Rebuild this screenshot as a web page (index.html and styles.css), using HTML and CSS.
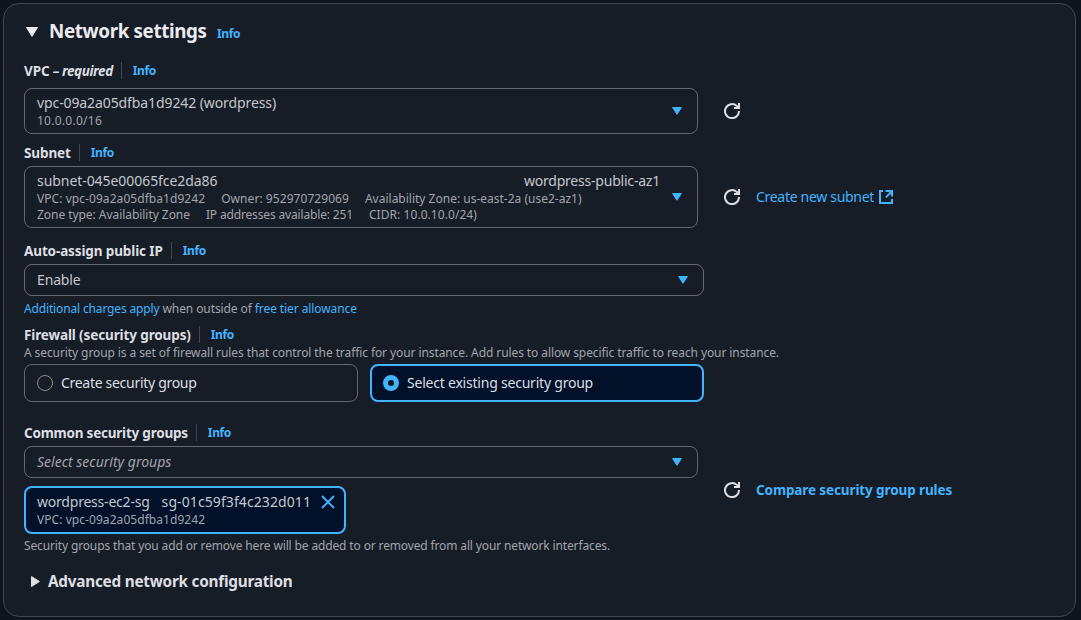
FILE: index.html
```html
<!DOCTYPE html>
<html lang="en">
<head>
<meta charset="utf-8">
<title>Network settings</title>
<link rel="stylesheet" href="styles.css">
</head>
<body>
<svg class="defs" aria-hidden="true">
  <symbol id="refresh" viewBox="0 0 16 16"><path d="M15 8A7 7 0 1 1 12.9 3.1L15 5M15 0v5H10" fill="none" stroke="currentColor" stroke-width="2"/></symbol>
  <symbol id="caret" viewBox="0 0 10 8"><path d="M.6.5h8.8L5 7.3z" fill="currentColor" stroke="currentColor" stroke-linejoin="round"/></symbol>
</svg>
<main class="card">
  <h2 class="heading"><svg class="toggle" viewBox="0 0 12 10"><path d="M.5.5h11L6 9.3z" fill="currentColor" stroke="currentColor" stroke-linejoin="round"/></svg><span>Network settings</span><a class="info">Info</a></h2>

  <section class="field vpc">
    <div class="label"><span>VPC <i>– required</i></span><a class="info">Info</a></div>
    <div class="row">
      <div class="select">
        <div class="value"><div class="main vpc-id">vpc-09a2a05dfba1d9242 (wordpress)</div><div class="meta"><span class="cidr">10.0.0.0/16</span></div></div>
        <svg class="caret"><use href="#caret"/></svg>
      </div>
      <svg class="refresh"><use href="#refresh"/></svg>
    </div>
  </section>

  <section class="field subnet">
    <div class="label"><span>Subnet</span><a class="info">Info</a></div>
    <div class="row">
      <div class="select">
        <div class="value">
          <div class="main"><span class="subnet-id">subnet-045e00065fce2da86</span><span class="subnet-name">wordpress-public-az1</span></div>
          <div class="meta"><span class="wide">VPC: vpc-09a2a05dfba1d9242</span><span class="wide">Owner: 952970729069</span><span>Availability Zone: us-east-2a (use2-az1)</span></div>
          <div class="meta"><span class="zone">Zone type: Availability Zone</span><span class="tight">IP addresses available: 251</span><span class="wide">CIDR: 10.0.10.0/24)</span></div>
        </div>
        <svg class="caret"><use href="#caret"/></svg>
      </div>
      <svg class="refresh"><use href="#refresh"/></svg>
      <a class="link">Create new subnet</a>
      <svg class="external" viewBox="0 0 14 14"><path d="M4 1H1v12h12V9M6.5 1H13v5.5M12.6 1.4L7 7.4" fill="none" stroke="currentColor" stroke-width="2"/></svg>
    </div>
  </section>

  <section class="field auto-ip">
    <div class="label"><span>Auto-assign public IP</span><a class="info">Info</a></div>
    <div class="select"><div class="value main enable">Enable</div><svg class="caret"><use href="#caret"/></svg></div>
    <p class="hint"><a class="charges">Additional charges apply</a> when outside of <a>free tier allowance</a></p>
  </section>

  <section class="field firewall">
    <div class="label"><span>Firewall (security groups)</span><a class="info">Info</a></div>
    <p class="hint">A security group is a set of firewall rules that control the traffic for your instance. Add rules to allow specific traffic to reach your instance.</p>
    <div class="tiles">
      <div class="tile"><i class="radio"></i><span class="create">Create security group</span></div>
      <div class="tile selected"><i class="radio"></i><span>Select existing security group</span></div>
    </div>
  </section>

  <section class="field groups">
    <div class="row">
      <div class="stack">
        <div class="label"><span>Common security groups</span><a class="info">Info</a></div>
        <div class="select"><div class="value placeholder">Select security groups</div><svg class="caret"><use href="#caret"/></svg></div>
        <div class="token">
          <div>
            <div class="main"><span class="sg-name">wordpress-ec2-sg</span><span class="sg-id">sg-01c59f3f4c232d011</span></div>
            <div class="meta"><span class="wide">VPC: vpc-09a2a05dfba1d9242</span></div>
          </div>
          <svg class="close" viewBox="0 0 14 14"><path d="M1 1l12 12M13 1L1 13" stroke="currentColor" stroke-width="1.8"/></svg>
        </div>
      </div>
      <svg class="refresh"><use href="#refresh"/></svg>
      <a class="link strong">Compare security group rules</a>
    </div>
    <p class="hint note">Security groups that you add or remove here will be added to or removed from all your network interfaces.</p>
  </section>

  <h3 class="advanced"><svg viewBox="0 0 9 11"><path d="M.5.5v10L8.4 5.5z" fill="currentColor" stroke="currentColor" stroke-linejoin="round"/></svg><span>Advanced network configuration</span></h3>
</main>
</body>
</html>
```
FILE: styles.css
```css
* { box-sizing: border-box; }
body { margin: 0; height: 620px; padding: 3px 5px 3px 3px; background: #0f151c; color: #dedee3; font: 14px/20px "Noto Sans", sans-serif; overflow: hidden; }
p, h2, h3 { margin: 0; }
svg { flex: none; display: block; }
.defs { position: absolute; width: 0; height: 0; }
a { color: #42b4ff; }
.card { height: 614px; padding: 16px 20px 0; border: 1px solid #424650; border-radius: 16px; background: #161d26; }

.heading { display: flex; align-items: center; height: 22px; padding-left: 2px; font-size: 18.8px; letter-spacing: -.36px; color: #ebebf0; }
.heading .toggle { width: 12px; height: 10px; margin: 2px 11px 0 0; }
.heading span { width: 168px; white-space: nowrap; }
.info { font-size: 12px; font-weight: 700; letter-spacing: -.4px; }
.heading .info { padding-top: 5px; }

.label { display: flex; align-items: center; height: 17px; margin-bottom: 5px; font-size: 13.5px; font-weight: 700; letter-spacing: -.12px; white-space: nowrap; }
.label .info { margin-left: 8px; padding-left: 11px; border-left: 1px solid #424650; line-height: 17px; }
.vpc .label i { letter-spacing: -.42px; }
.vpc { margin-top: 20px; }
.vpc .label { margin-bottom: 9px; }
.subnet { margin-top: 10px; }
.auto-ip { margin-top: 14px; }
.firewall { margin-top: 10px; }
.firewall .label { margin-bottom: 1px; }
.groups { margin-top: 22px; }
.groups .label { letter-spacing: -.22px; }

.row { display: flex; align-items: center; }
.select { display: flex; align-items: center; width: 674px; height: 32px; padding: 0 15px 0 12px; border: 1px solid #656871; border-radius: 8px; }
.vpc .select { height: 46px; }
.subnet .select { height: 62px; }
.auto-ip .select { width: 680px; }
.value { flex: 1; }
.main { color: #c6c6cd; white-space: nowrap; }
.select .caret { width: 10px; height: 8px; color: #42b4ff; }
.vpc .main { line-height: 18px; }
.vpc-id { letter-spacing: -.1px; }
.subnet .main { display: flex; justify-content: space-between; padding-right: 12px; line-height: 18px; }
.subnet-id { letter-spacing: -.06px; }
.subnet-name { letter-spacing: -.21px; }
.enable { letter-spacing: -.15px; }
.meta { display: flex; gap: 16px; height: 16px; font-size: 12px; line-height: 18px; color: #a4a4ad; white-space: nowrap; }
.meta .wide { letter-spacing: .06px; }
.meta .cidr { letter-spacing: .26px; }
.meta .zone { letter-spacing: -.05px; }
.meta .tight { letter-spacing: -.155px; }
.placeholder { font-style: italic; color: #a4a4ad; }

.refresh { width: 16px; height: 16px; margin-left: 26px; color: #dedee3; }
.link { margin-left: 16px; letter-spacing: -.3px; white-space: nowrap; }
.link.strong { font-size: 13.5px; font-weight: 700; letter-spacing: -.11px; }
.external { width: 14px; height: 14px; margin-left: 5px; color: #42b4ff; }

.hint { height: 16px; font-size: 12px; line-height: 18px; letter-spacing: -.092px; color: #a4a4ad; white-space: nowrap; }
.auto-ip .hint { margin-top: 4px; }
.hint .charges { letter-spacing: -.15px; }
.note { margin-top: 3px; letter-spacing: -.138px; }

.tiles { display: grid; grid-template-columns: 334px 334px; gap: 12px; margin-top: 4px; }
.tile { display: flex; align-items: center; gap: 8px; height: 38px; padding-left: 12px; border: 1px solid #656871; border-radius: 8px; letter-spacing: -.215px; }
.create { letter-spacing: -.297px; }
.radio { width: 16px; height: 16px; border: 1px solid #8c8c94; border-radius: 50%; }
.selected { padding-left: 11px; border: 2px solid #42b4ff; background: #001129; }
.selected .radio { border: 5px solid #42b4ff; background: #0f141a; }

.token { display: flex; justify-content: space-between; width: 322px; height: 48px; margin-top: 8px; padding: 5px 9px 0 11px; border: 2px solid #42b4ff; border-radius: 8px; background: #001129; }
.token .main { display: flex; gap: 12px; line-height: 18px; }
.sg-name { letter-spacing: -.21px; }
.sg-id { letter-spacing: .09px; }
.close { width: 14px; height: 14px; margin-top: 2px; color: #42b4ff; }
.groups .refresh, .groups .link { margin-top: 22px; }

.advanced { display: flex; align-items: center; height: 20px; margin-top: 18px; padding-left: 7px; font-size: 15.3px; letter-spacing: -.23px; }
.advanced svg { width: 9px; height: 11px; margin-right: 8px; }
```
